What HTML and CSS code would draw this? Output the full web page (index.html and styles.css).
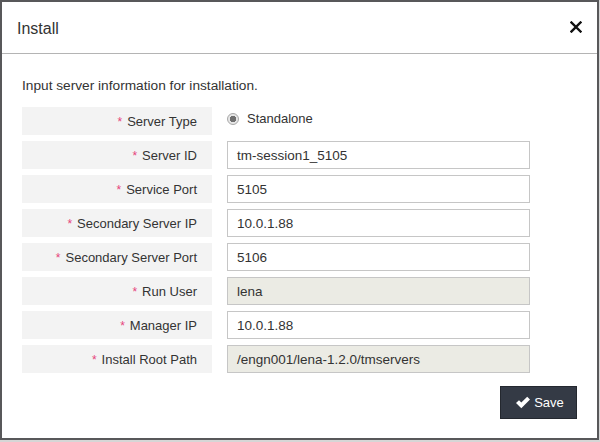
FILE: index.html
```html
<!DOCTYPE html>
<html>
<head>
<meta charset="utf-8">
<link rel="stylesheet" href="styles.css">
</head>
<body>
<div class="dialog">
  <div class="header">
    <div class="title">Install</div>
    <svg class="close" width="12" height="12" viewBox="0 0 12 12"><path d="M1.5 1.5 L10.5 10.5 M10.5 1.5 L1.5 10.5" stroke="#111" stroke-width="2.4" stroke-linecap="square"/></svg>
  </div>
  <div class="body">
    <p class="desc">Input server information for installation.</p>
    <div class="form">
      <div class="label"><span class="req">*</span>Server Type</div>
      <div class="radio-field"><span class="radio"></span><span>Standalone</span></div>

      <div class="label"><span class="req">*</span>Server ID</div>
      <div class="input">tm-session1_5105</div>

      <div class="label"><span class="req">*</span>Service Port</div>
      <div class="input">5105</div>

      <div class="label"><span class="req">*</span>Secondary Server IP</div>
      <div class="input">10.0.1.88</div>

      <div class="label"><span class="req">*</span>Secondary Server Port</div>
      <div class="input">5106</div>

      <div class="label"><span class="req">*</span>Run User</div>
      <div class="input readonly">lena</div>

      <div class="label"><span class="req">*</span>Manager IP</div>
      <div class="input">10.0.1.88</div>

      <div class="label"><span class="req">*</span>Install Root Path</div>
      <div class="input readonly">/engn001/lena-1.2.0/tmservers</div>
    </div>
    <div class="actions">
      <button class="save"><svg width="16" height="13" viewBox="0 0 16 13"><path d="M1 7 L4 4.2 L6.3 6.6 L12.2 0.8 L15 3.6 L6.3 12.2 Z" fill="#fff"/></svg><span>Save</span></button>
    </div>
  </div>
</div>
</body>
</html>
```
FILE: styles.css
```css
html, body {
  margin: 0;
  padding: 0;
}
body {
  background: #d6d6d6;
  width: 600px;
  height: 442px;
  font-family: "Liberation Sans", Arial, sans-serif;
  color: #333;
}
.dialog {
  width: 599px;
  height: 440px;
  box-sizing: border-box;
  border: 2px solid #58585a;
  background: #fff;
  display: flex;
  flex-direction: column;
}
.header {
  height: 52px;
  box-sizing: border-box;
  border-bottom: 1px solid #b4b4b4;
  display: flex;
  align-items: center;
  justify-content: space-between;
  padding: 2px 15px 0 15px;
}
.title {
  font-size: 16px;
  color: #333;
}
.close {
  display: block;
  margin-top: -4px;
}
.body {
  padding: 21px 0 0 20px;
}
.desc {
  margin: 0;
  font-size: 13.7px;
  line-height: 22px;
  color: #333;
}
.form {
  margin-top: 10px;
  display: grid;
  grid-template-columns: 190px 303px;
  grid-auto-rows: 28px;
  column-gap: 15px;
  row-gap: 6px;
}
.label {
  background: #f3f3f3;
  display: flex;
  align-items: center;
  justify-content: flex-end;
  padding-right: 15px;
  font-size: 13px;
  color: #333;
}
.req {
  color: #e6447c;
  font-size: 12px;
  margin-right: 5px;
  vertical-align: middle;
  position: relative;
  top: 1px;
}
.radio-field {
  display: flex;
  align-items: center;
  font-size: 13px;
  padding-bottom: 5px;
}
.radio {
  width: 12px;
  height: 12px;
  box-sizing: border-box;
  border-radius: 50%;
  border: 1px solid #a8a8a8;
  background: radial-gradient(circle, #6f6f6f 0 3px, #e6e6e6 3.5px);
  margin: 0 8px 0 0;
}
.input {
  border: 1px solid #c6c6c6;
  background: #fff;
  display: flex;
  align-items: center;
  padding-left: 9px;
  font-size: 13.5px;
  color: #333;
}
.input.readonly {
  background: #ebebe4;
}
.actions {
  display: flex;
  justify-content: flex-end;
  padding-right: 20px;
  margin-top: 13px;
}
.save {
  width: 77px;
  height: 33px;
  border: 1px solid #24282f;
  background: #343a45;
  color: #fff;
  font-family: "Liberation Sans", Arial, sans-serif;
  font-size: 13px;
  display: flex;
  align-items: center;
  justify-content: center;
  gap: 3px;
  padding: 0 0 0 2px;
}
.save svg {
  display: block;
}
```
